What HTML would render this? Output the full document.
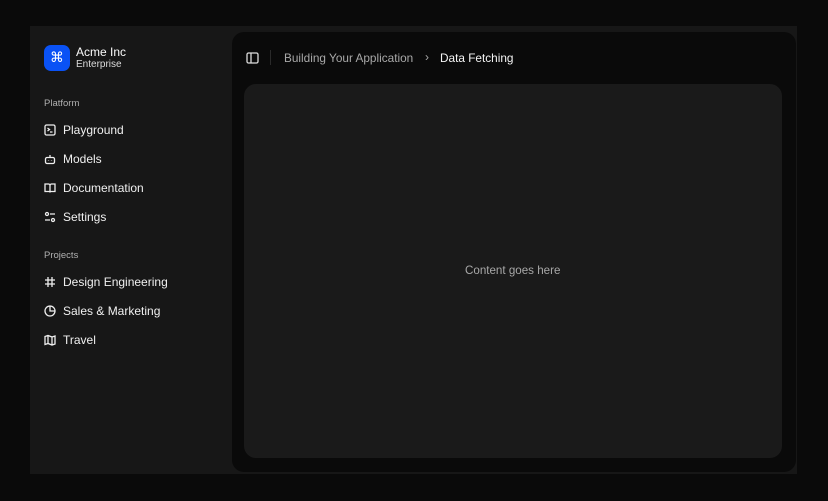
<!DOCTYPE html><html><head><style>
*{margin:0;padding:0;box-sizing:border-box}
body{width:828px;height:501px;background:#0a0a0a;font-family:"Liberation Sans",sans-serif;position:relative;overflow:hidden;color:#fafafa}
.frame{position:absolute;left:30px;top:26px;width:767px;height:448px;background:#171717}
.panel{position:absolute;left:232px;top:32px;width:564px;height:440px;background:#0a0a0a;border-radius:12px}
.card{position:absolute;left:244px;top:84px;width:538px;height:374px;background:#1a1a1a;border-radius:12px}
.logo{position:absolute;left:44px;top:45px;width:26px;height:26px;border-radius:7px;background:#0a52f5;color:#fff;font-size:14px;text-align:center;line-height:26px;font-family:"DejaVu Sans",sans-serif}
.t{position:absolute;white-space:nowrap}
.item{position:absolute;left:44px;font-size:12px;color:#f0f0f0;display:flex;align-items:center;gap:7px}
.item svg{width:12px;height:12px;stroke:#eee;fill:none;stroke-width:1.3}
.lbl{position:absolute;left:44px;font-size:9.5px;color:#b0b0b0}
</style></head><body>
<div class="frame"></div>
<div class="panel"></div>
<div class="card"></div>
<div class="logo">⌘</div>
<div class="t" style="left:76px;top:45px;font-size:12px">Acme Inc</div>
<div class="t" style="left:76px;top:59px;font-size:10px;color:#ddd">Enterprise</div>
<div class="lbl" style="top:98px">Platform</div>
<div class="item" style="top:123px"><svg viewBox="0 0 12 12"><rect x="1" y="1" width="10" height="10" rx="1.5"/><path d="M3.5 4l2 1.5-2 1.5M6 8h2.5"/></svg>Playground</div>
<div class="item" style="top:152px"><svg viewBox="0 0 12 12"><rect x="1.5" y="4.5" width="9" height="6" rx="1.5"/><path d="M6 4.5V2M4.5 7.5v.5M7.5 7.5v.5"/></svg>Models</div>
<div class="item" style="top:181px"><svg viewBox="0 0 12 12"><path d="M1 2h3.5a1.5 1.5 0 011.5 1.5V10.5a1 1 0 00-1-1H1zM11 2H7.5A1.5 1.5 0 006 3.5v7a1 1 0 011-1h4z"/></svg>Documentation</div>
<div class="item" style="top:210px"><svg viewBox="0 0 12 12"><path d="M6 3h5M1 9h5"/><circle cx="3" cy="3" r="1.5"/><circle cx="9" cy="9" r="1.5"/></svg>Settings</div>
<div class="lbl" style="top:250px">Projects</div>
<div class="item" style="top:275px"><svg viewBox="0 0 12 12"><path d="M4 1v10M8 1v10M1 4h10M1 8h10"/></svg>Design Engineering</div>
<div class="item" style="top:304px"><svg viewBox="0 0 12 12"><circle cx="6" cy="6" r="5"/><path d="M6 1v5h5"/></svg>Sales &amp; Marketing</div>
<div class="item" style="top:333px"><svg viewBox="0 0 12 12"><path d="M1 2.5l3-1 4 1.5 3-1v8l-3 1-4-1.5-3 1zM4 1.5v8M8 3v8"/></svg>Travel</div>
<svg style="position:absolute;left:246px;top:52px" width="13" height="12" viewBox="0 0 13 12" fill="none" stroke="#ddd" stroke-width="1.3"><rect x="1" y="1" width="11" height="10" rx="1.5"/><path d="M5 1v10"/></svg>
<div style="position:absolute;left:270px;top:50px;width:1px;height:15px;background:#2a2a2a"></div>
<div class="t" style="left:284px;top:51px;font-size:11.8px;color:#a8a8a8">Building Your Application</div>
<div class="t" style="left:425px;top:50px;font-size:12px;color:#a8a8a8">›</div>
<div class="t" style="left:440px;top:51px;font-size:11.8px;color:#f5f5f5">Data Fetching</div>
<div class="t" style="left:465px;top:264px;font-size:11.6px;color:#a8a8a8">Content goes here</div>
</body></html>
